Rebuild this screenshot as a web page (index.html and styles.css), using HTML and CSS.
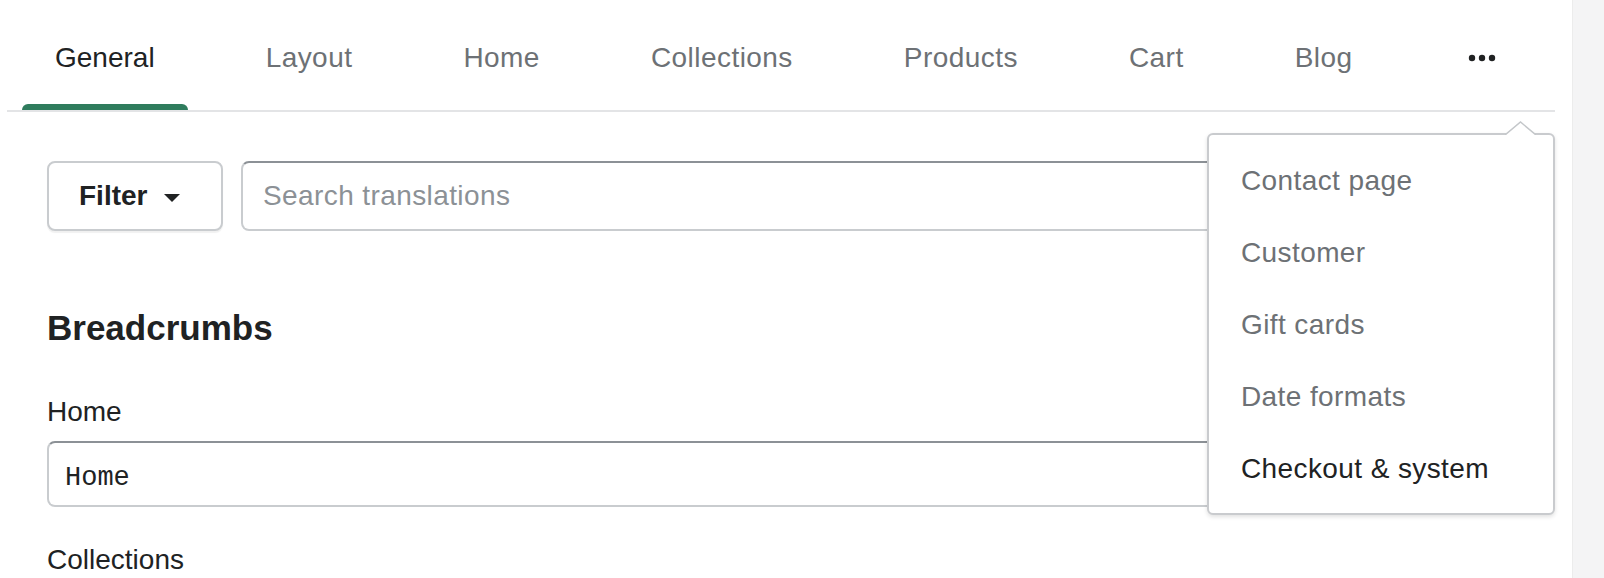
FILE: index.html
```html
<!DOCTYPE html>
<html lang="en">
  <head>
    <meta charset="UTF-8" />
    <title>Translations</title>
    <link rel="stylesheet" href="styles.css">
  </head>
  <body>
    <div class="page">
      <main class="main">
        <nav class="tabs">
          <a class="tab active">General</a>
          <a class="tab">Layout</a>
          <a class="tab">Home</a>
          <a class="tab">Collections</a>
          <a class="tab">Products</a>
          <a class="tab">Cart</a>
          <a class="tab">Blog</a>
          <a class="tab more">
            <svg width="28" height="8" viewBox="0 0 28 8">
              <circle cx="4" cy="4" r="3.2" fill="#202223" />
              <circle cx="14" cy="4" r="3.2" fill="#202223" />
              <circle cx="24" cy="4" r="3.2" fill="#202223" />
            </svg>
          </a>
        </nav>

        <!-- popover for the "more" tab -->
        <div class="popover">
          <svg class="popover-tip" width="31" height="14" viewBox="0 0 31 14">
            <polyline points="0,14 15.5,1 31,14" fill="#fff" stroke="#c4c7ca" stroke-width="1.5" />
          </svg>
          <ul class="menu">
            <li>Contact page</li>
            <li>Customer</li>
            <li>Gift cards</li>
            <li>Date formats</li>
            <li class="current">Checkout &amp; system</li>
          </ul>
        </div>

        <section class="content">
          <div class="toolbar">
            <button class="filter">Filter <span class="caret"></span></button>
            <input class="search" type="text" placeholder="Search translations" />
          </div>

          <h2>Breadcrumbs</h2>

          <div class="field">
            <label for="home">Home</label>
            <input id="home" class="text" type="text" value="Home" />
          </div>
          <div class="field">
            <label for="collections">Collections</label>
          </div>
        </section>
      </main>
      <aside class="side"></aside>
    </div>
  </body>
</html>
```

FILE: styles.css
```css
body {
  margin: 0;
  padding: 0;
  background: #fff;
  color: #202223;
  font-family: "Liberation Sans", Arial, sans-serif;
  font-size: 28px;
}
.page {
  display: flex;
  height: 578px;
  overflow: hidden;
}
.main {
  flex: 1;
  position: relative;
}
.side {
  width: 31px;
  background: #f4f4f5;
  border-left: 1px solid #ececec;
}

/* tabs */
.tabs {
  display: flex;
  gap: 45px;
  height: 110px;
  margin: 0 17px 0 7px;
  padding-left: 15px;
  border-bottom: 2px solid #e3e4e6;
}
.tab {
  position: relative;
  display: flex;
  align-items: center;
  padding: 6px 33px 0;
  color: #6d7175;
  letter-spacing: 0.45px;
  cursor: pointer;
}
.tab.active {
  color: #202223;
  letter-spacing: 0;
}
.tab.active::after {
  content: "";
  position: absolute;
  left: 0;
  right: 0;
  bottom: 0;
  height: 6px;
  border-radius: 6px 6px 0 0;
  background: #2f7c5d;
}
.tab.more {
  margin-left: 20px;
  padding: 6px 24px 0 18px;
}

/* popover */
.popover {
  position: absolute;
  top: 133px;
  left: 1207px;
  width: 344px;
  height: 378px;
  background: #fff;
  border: 2px solid #c9cbce;
  border-radius: 6px;
  box-shadow: 0 2px 4px rgba(0, 0, 0, 0.12);
  z-index: 2;
}
.popover-tip {
  position: absolute;
  top: -14px;
  left: 296px;
}
.menu {
  list-style: none;
  margin: 0;
  padding: 10px 0 8px;
}
.menu li {
  height: 72px;
  line-height: 72px;
  padding-left: 32px;
  color: #6d7175;
  letter-spacing: 0.4px;
}
.menu li.current {
  color: #202223;
}

/* content */
.content {
  padding: 49px 47px 0 47px;
}
.toolbar {
  display: flex;
  gap: 18px;
}
.filter {
  display: flex;
  align-items: center;
  gap: 17px;
  width: 176px;
  height: 70px;
  padding: 0 0 0 30px;
  background: #fff;
  border: 2px solid #c9cccf;
  border-radius: 8px;
  box-shadow: 0 2px 1px rgba(0, 0, 0, 0.06);
  color: #202223;
  font-family: inherit;
  font-size: 28px;
  font-weight: bold;
}
.caret {
  width: 0;
  height: 0;
  margin-top: 4px;
  border-left: 8px solid transparent;
  border-right: 8px solid transparent;
  border-top: 8px solid #202223;
}
.search {
  flex: 1;
  height: 70px;
  box-sizing: border-box;
  padding: 0 20px;
  border: 2px solid #c9cccf;
  border-top-color: #8c9196;
  border-radius: 8px;
  font-family: inherit;
  font-size: 28px;
  letter-spacing: 0.4px;
}
.search::placeholder {
  color: #8c9196;
}
h2 {
  margin: 77px 0 0;
  font-size: 35px;
  line-height: 40px;
  font-weight: bold;
}
.field {
  margin-top: 46px;
}
.field + .field {
  margin-top: 35px;
}
label {
  display: block;
  line-height: 36px;
  margin-bottom: 11px;
}
.text {
  display: block;
  width: 100%;
  height: 66px;
  box-sizing: border-box;
  padding: 7px 16px 0;
  border: 2px solid #c9cccf;
  border-top-color: #8c9196;
  border-radius: 8px;
  color: #202223;
  font-family: "Liberation Mono", "Courier New", monospace;
  font-size: 27px;
}
```
